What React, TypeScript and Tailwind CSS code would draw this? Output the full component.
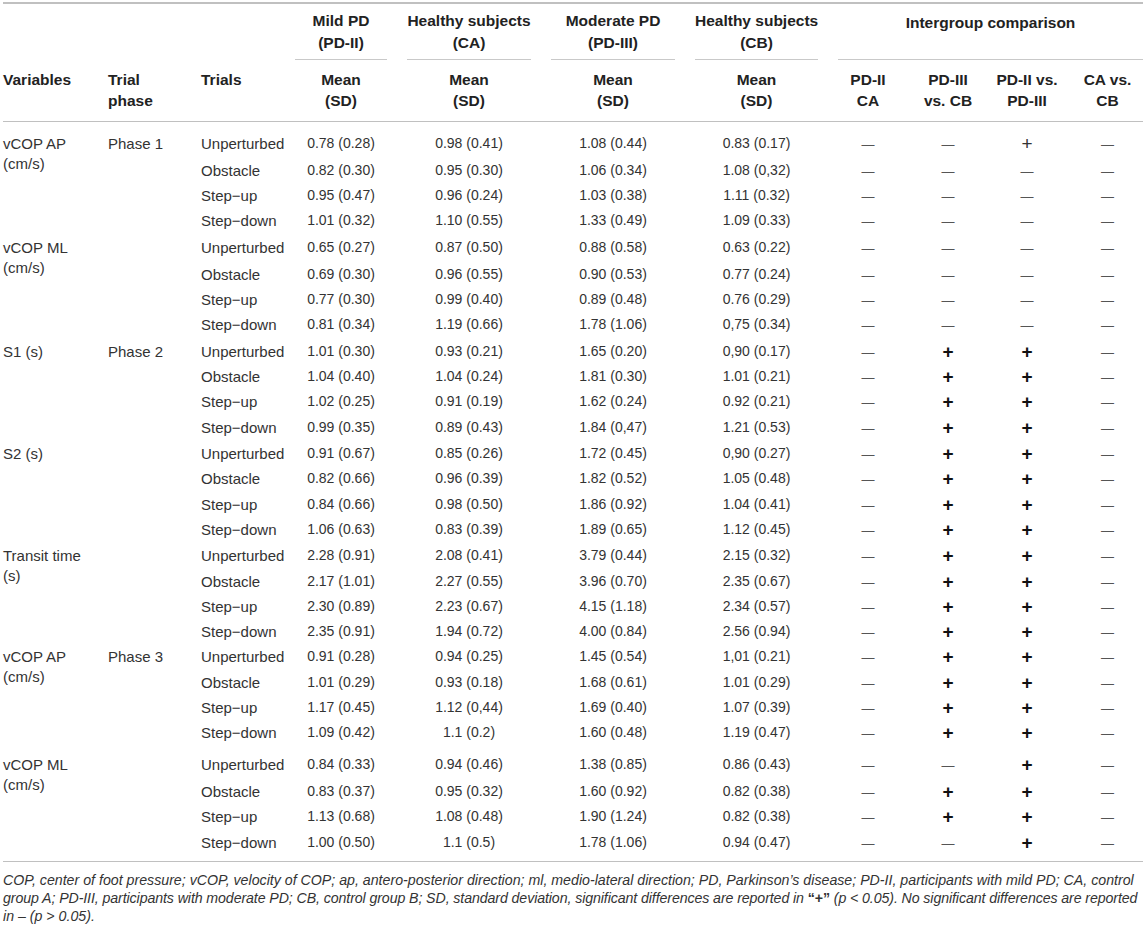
import type { ReactNode } from 'react'

const COLS = 'grid grid-cols-[105px_93px_84px_112px_144px_144px_143px_80px_80px_78px_77px]'

type Sig = '+' | '-' | 'p'

interface Row {
  trial: string
  values: [string, string, string, string]
  sig: [Sig, Sig, Sig, Sig]
  h: number
}

interface Group {
  label: string[]
  phase?: string
  rows: Row[]
}

const NS: [Sig, Sig, Sig, Sig] = ['-', '-', '-', '-']
const MID: [Sig, Sig, Sig, Sig] = ['-', '+', '+', '-']

const heightClass: Record<number, string> = {
  25: 'h-[25px]',
  26: 'h-[26px]',
  27: 'h-[27px]',
  28: 'h-[28px]',
  30: 'h-[30px]',
  32: 'h-[32px]',
}

const groups: Group[] = [
  {
    label: ['vCOP AP', '(cm/s)'],
    phase: 'Phase 1',
    rows: [
      { trial: 'Unperturbed', values: ['0.78 (0.28)', '0.98 (0.41)', '1.08 (0.44)', '0.83 (0.17)'], sig: ['-', '-', 'p', '-'], h: 27 },
      { trial: 'Obstacle', values: ['0.82 (0.30)', '0.95 (0.30)', '1.06 (0.34)', '1.08 (0,32)'], sig: NS, h: 25 },
      { trial: 'Step\u2212up', values: ['0.95 (0.47)', '0.96 (0.24)', '1.03 (0.38)', '1.11 (0.32)'], sig: NS, h: 25 },
      { trial: 'Step\u2212down', values: ['1.01 (0.32)', '1.10 (0.55)', '1.33 (0.49)', '1.09 (0.33)'], sig: NS, h: 27 },
    ],
  },
  {
    label: ['vCOP ML', '(cm/s)'],
    rows: [
      { trial: 'Unperturbed', values: ['0.65 (0.27)', '0.87 (0.50)', '0.88 (0.58)', '0.63 (0.22)'], sig: NS, h: 27 },
      { trial: 'Obstacle', values: ['0.69 (0.30)', '0.96 (0.55)', '0.90 (0.53)', '0.77 (0.24)'], sig: NS, h: 25 },
      { trial: 'Step\u2212up', values: ['0.77 (0.30)', '0.99 (0.40)', '0.89 (0.48)', '0.76 (0.29)'], sig: NS, h: 25 },
      { trial: 'Step\u2212down', values: ['0.81 (0.34)', '1.19 (0.66)', '1.78 (1.06)', '0,75 (0.34)'], sig: NS, h: 27 },
    ],
  },
  {
    label: ['S1 (s)'],
    phase: 'Phase 2',
    rows: [
      { trial: 'Unperturbed', values: ['1.01 (0.30)', '0.93 (0.21)', '1.65 (0.20)', '0,90 (0.17)'], sig: MID, h: 25 },
      { trial: 'Obstacle', values: ['1.04 (0.40)', '1.04 (0.24)', '1.81 (0.30)', '1.01 (0.21)'], sig: MID, h: 25 },
      { trial: 'Step\u2212up', values: ['1.02 (0.25)', '0.91 (0.19)', '1.62 (0.24)', '0.92 (0.21)'], sig: MID, h: 26 },
      { trial: 'Step\u2212down', values: ['0.99 (0.35)', '0.89 (0.43)', '1.84 (0,47)', '1.21 (0.53)'], sig: MID, h: 26 },
    ],
  },
  {
    label: ['S2 (s)'],
    rows: [
      { trial: 'Unperturbed', values: ['0.91 (0.67)', '0.85 (0.26)', '1.72 (0.45)', '0,90 (0.27)'], sig: MID, h: 25 },
      { trial: 'Obstacle', values: ['0.82 (0.66)', '0.96 (0.39)', '1.82 (0.52)', '1.05 (0.48)'], sig: MID, h: 26 },
      { trial: 'Step\u2212up', values: ['0.84 (0.66)', '0.98 (0.50)', '1.86 (0.92)', '1.04 (0.41)'], sig: MID, h: 25 },
      { trial: 'Step\u2212down', values: ['1.06 (0.63)', '0.83 (0.39)', '1.89 (0.65)', '1.12 (0.45)'], sig: MID, h: 26 },
    ],
  },
  {
    label: ['Transit time', '(s)'],
    rows: [
      { trial: 'Unperturbed', values: ['2.28 (0.91)', '2.08 (0.41)', '3.79 (0.44)', '2.15 (0.32)'], sig: MID, h: 26 },
      { trial: 'Obstacle', values: ['2.17 (1.01)', '2.27 (0.55)', '3.96 (0.70)', '2.35 (0.67)'], sig: MID, h: 25 },
      { trial: 'Step\u2212up', values: ['2.30 (0.89)', '2.23 (0.67)', '4.15 (1.18)', '2.34 (0.57)'], sig: MID, h: 25 },
      { trial: 'Step\u2212down', values: ['2.35 (0.91)', '1.94 (0.72)', '4.00 (0.84)', '2.56 (0.94)'], sig: MID, h: 25 },
    ],
  },
  {
    label: ['vCOP AP', '(cm/s)'],
    phase: 'Phase 3',
    rows: [
      { trial: 'Unperturbed', values: ['0.91 (0.28)', '0.94 (0.25)', '1.45 (0.54)', '1,01 (0.21)'], sig: MID, h: 26 },
      { trial: 'Obstacle', values: ['1.01 (0.29)', '0.93 (0.18)', '1.68 (0.61)', '1.01 (0.29)'], sig: MID, h: 25 },
      { trial: 'Step\u2212up', values: ['1.17 (0.45)', '1.12 (0,44)', '1.69 (0.40)', '1.07 (0.39)'], sig: MID, h: 25 },
      { trial: 'Step\u2212down', values: ['1.09 (0.42)', '1.1 (0.2)', '1.60 (0.48)', '1.19 (0.47)'], sig: MID, h: 32 },
    ],
  },
  {
    label: ['vCOP ML', '(cm/s)'],
    rows: [
      { trial: 'Unperturbed', values: ['0.84 (0.33)', '0.94 (0.46)', '1.38 (0.85)', '0.86 (0.43)'], sig: ['-', '-', '+', '-'], h: 27 },
      { trial: 'Obstacle', values: ['0.83 (0.37)', '0.95 (0.32)', '1.60 (0.92)', '0.82 (0.38)'], sig: MID, h: 25 },
      { trial: 'Step\u2212up', values: ['1.13 (0.68)', '1.08 (0.48)', '1.90 (1.24)', '0.82 (0.38)'], sig: MID, h: 26 },
      { trial: 'Step\u2212down', values: ['1.00 (0.50)', '1.1 (0.5)', '1.78 (1.06)', '0.94 (0.47)'], sig: ['-', '-', '+', '-'], h: 25 },
    ],
  },
]

function SigMark({ s }: { s: Sig }) {
  if (s === '-') return <span className="text-[13px] text-[#555]">—</span>
  if (s === 'p') return <span className="text-[19px] font-normal text-[#333]">+</span>
  return <span className="text-[19px] font-bold text-[#111]">+</span>
}

function GroupHead({ children }: { children: ReactNode }) {
  return (
    <div className="px-[10px]">
      <div className="border-b border-[#c9c9c9] pt-[6px] pb-[5px] text-center leading-[22px] whitespace-nowrap">{children}</div>
    </div>
  )
}

export default function App() {
  return (
    <div className="min-h-[931px] bg-white pl-[3px] pt-[2px] font-['Liberation_Sans',Arial,sans-serif] text-[#333]">
      <div className="w-[1140px] border-t-2 border-[#c0c0c0]">
        {/* Column headings */}
        <div className={`${COLS} text-[15.5px] font-bold text-[#222]`}>
          <div />
          <div />
          <div />
          <GroupHead>Mild PD<br />(PD-II)</GroupHead>
          <GroupHead>Healthy subjects<br />(CA)</GroupHead>
          <GroupHead>Moderate PD<br />(PD-III)</GroupHead>
          <GroupHead>Healthy subjects<br />(CB)</GroupHead>
          <div className="col-span-4 pl-[10px]">
            <div className="h-[56px] border-b border-[#c9c9c9] pt-[8px] text-center leading-[22px]">Intergroup comparison</div>
          </div>
        </div>
        <div className={`${COLS} border-b border-[#c0c0c0] pt-[9px] pb-[10px] text-[15.5px] font-bold leading-[21px] text-[#222]`}>
          <div>Variables</div>
          <div>Trial<br />phase</div>
          <div>Trials</div>
          <div className="text-center">Mean<br />(SD)</div>
          <div className="text-center">Mean<br />(SD)</div>
          <div className="text-center">Mean<br />(SD)</div>
          <div className="text-center">Mean<br />(SD)</div>
          <div className="text-center">PD-II<br />CA</div>
          <div className="text-center">PD-III<br />vs. CB</div>
          <div className="text-center">PD-II vs.<br />PD-III</div>
          <div className="pl-[6px] text-center">CA vs.<br />CB</div>
        </div>

        {/* Body */}
        <div className="border-b border-[#c0c0c0] pt-[9px] pb-[6px]">
          {groups.map((g, gi) =>
            g.rows.map((r, ri) => (
              <div key={`${gi}-${ri}`} className={`${COLS} ${heightClass[r.h]} leading-[25px]`}>
                <div className="pt-[2.5px] text-[15px] leading-[20px] whitespace-nowrap">
                  {ri === 0 ? g.label.map((l) => <div key={l}>{l}</div>) : null}
                </div>
                <div className="text-[15px]">{ri === 0 ? g.phase : null}</div>
                <div className="text-[15px] whitespace-nowrap">{r.trial}</div>
                {r.values.map((v, vi) => (
                  <div key={vi} className="text-center text-[14px]">{v}</div>
                ))}
                {r.sig.map((s, si) => (
                  <div key={si} className={si === 3 ? 'pl-[6px] text-center' : 'text-center'}>
                    <SigMark s={s} />
                  </div>
                ))}
              </div>
            )),
          )}
        </div>

        {/* Footnote */}
        <div className="pt-[9px] text-[14.2px] italic leading-[18px] text-[#333]">
          <div className="whitespace-nowrap">
            COP, center of foot pressure; vCOP, velocity of COP; ap, antero-posterior direction; ml, medio-lateral direction; PD, Parkinson’s disease; PD-II, participants with mild PD; CA, control
          </div>
          <div className="whitespace-nowrap tracking-[-0.1px]">
            group A; PD-III, participants with moderate PD; CB, control group B; SD, standard deviation, significant differences are reported in <span className="font-bold not-italic">“+”</span> (p &lt; 0.05). No significant differences are reported
          </div>
          <div className="whitespace-nowrap">in – (p &gt; 0.05).</div>
        </div>
      </div>
    </div>
  )
}
